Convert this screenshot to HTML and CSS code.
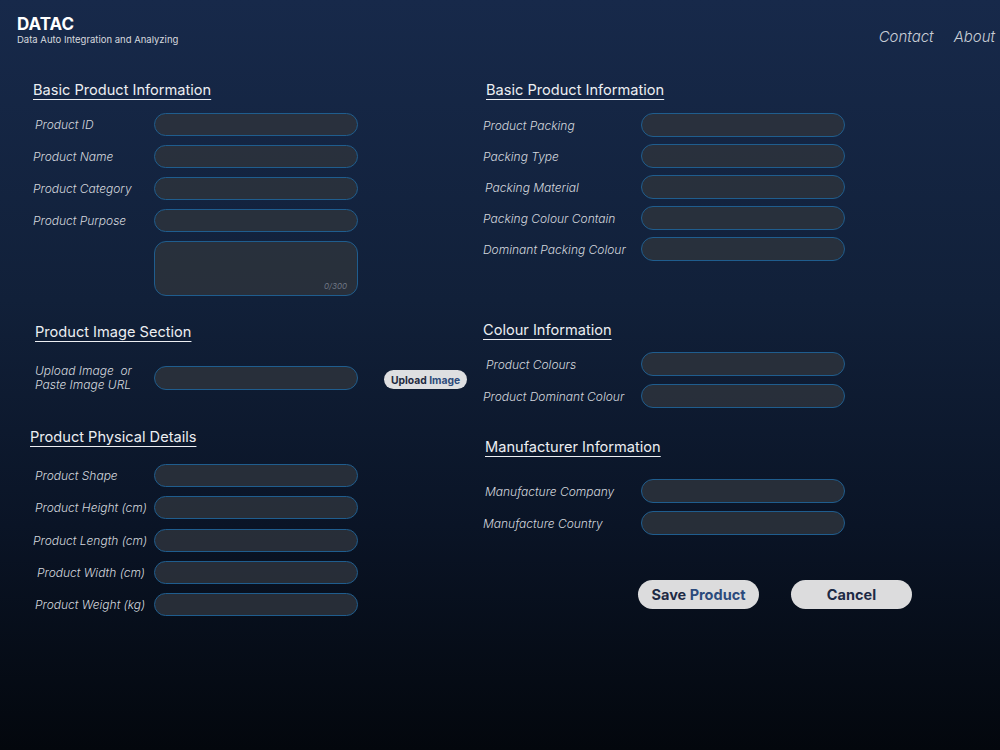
FILE: index.html
```html
<!DOCTYPE html>
<html lang="en">
<head>
<meta charset="UTF-8">
<meta name="viewport" content="width=device-width, initial-scale=1.0">
<title>DATAC - Add Product</title>
<link rel="stylesheet" href="styles.css">
</head>
<body>
    <header class="topbar">
        <div class="brand">
            <div class="brand_name">DATAC</div>
            <div class="brand_sub">Data Auto Integration and Analyzing</div>
        </div>
        <nav class="nav">
            <a href="#">Contact</a>
            <a href="#">About</a>
        </nav>
    </header>

    <form class="product_form">
        <div class="col col_left">
            <section class="block">
                <h2 class="block_title t_indent3">Basic Product Information</h2>
                <div class="rows">
                    <p class="row"><label class="in5">Product ID</label><input type="text"></p>
                    <p class="row"><label class="in3">Product Name</label><input type="text"></p>
                    <p class="row"><label class="in3">Product Category</label><input type="text"></p>
                    <p class="row"><label class="in3">Product Purpose</label><input type="text"></p>
                    <p class="row"><label></label>
                        <span class="textarea_wrap"><textarea></textarea><span class="counter">0/300</span></span>
                    </p>
                </div>
            </section>

            <section class="block block_image">
                <h2 class="block_title t_indent5">Product Image Section</h2>
                <div class="row row_upload">
                    <label class="in5 two_line">Upload Image&nbsp; or<br>Paste Image URL</label>
                    <input type="text">
                    <button type="button" class="btn_upload">Upload <span>Image</span></button>
                </div>
            </section>

            <section class="block block_physical">
                <h2 class="block_title">Product Physical Details</h2>
                <div class="rows">
                    <p class="row"><label class="in5">Product Shape</label><input type="text"></p>
                    <p class="row"><label class="in5">Product Height (cm)</label><input type="text"></p>
                    <p class="row"><label class="in3">Product Length (cm)</label><input type="text"></p>
                    <p class="row"><label class="in7">Product Width (cm)</label><input type="text"></p>
                    <p class="row"><label class="in5">Product Weight (kg)</label><input type="text"></p>
                </div>
            </section>
        </div>

        <div class="col col_right">
            <section class="block">
                <h2 class="block_title t_indent3">Basic Product Information</h2>
                <div class="rows rows_tight">
                    <p class="row"><label>Product Packing</label><input type="text"></p>
                    <p class="row"><label>Packing Type</label><input type="text"></p>
                    <p class="row"><label class="in2">Packing Material</label><input type="text"></p>
                    <p class="row"><label>Packing Colour Contain</label><input type="text"></p>
                    <p class="row"><label>Dominant Packing Colour</label><input type="text"></p>
                </div>
            </section>

            <section class="block block_colour">
                <h2 class="block_title">Colour Information</h2>
                <div class="rows">
                    <p class="row"><label class="in3">Product Colours</label><input type="text"></p>
                    <p class="row"><label>Product Dominant Colour</label><input type="text"></p>
                </div>
            </section>

            <section class="block block_maker">
                <h2 class="block_title t_indent2">Manufacturer Information</h2>
                <div class="rows">
                    <p class="row"><label class="in2">Manufacture Company</label><input type="text"></p>
                    <p class="row"><label>Manufacture Country</label><input type="text"></p>
                </div>
            </section>

            <div class="actions">
                <button type="submit" class="btn">Save <span>Product</span></button>
                <button type="button" class="btn">Cancel</button>
            </div>
        </div>
    </form>
</body>
</html>
```

FILE: styles.css
```css
*,
*::before,
*::after {
  box-sizing: border-box;
}
html, body {
    height: 100%;
}
body {
    margin: 0;
    font-family: Inter, "Noto Sans", sans-serif;
    color: #e6e8ec;
    background: linear-gradient(180deg, #17294a 0%, #112039 40%, #0a1426 70%, #03070d 100%);
    min-height: 750px;
}

/* header */
.topbar {
    display: flex;
    justify-content: space-between;
    padding: 14px 5px 0 17px;
}
.brand_name {
    font-size: 17px;
    font-weight: 700;
    line-height: 20px;
    color: #fff;
}
.brand_sub {
    font-size: 9.5px;
    line-height: 12px;
    color: #d6d9df;
}
.nav {
    display: flex;
    gap: 20px;
    padding-top: 13px;
}
.nav a {
    color: #c9ced6;
    font-style: italic;
    font-weight: 300;
    font-size: 15px;
    text-decoration: none;
}

/* form layout */
.product_form {
    display: grid;
    grid-template-columns: 453px 1fr;
    padding: 35px 0 0 30px;
}
.col {
    display: flex;
    flex-direction: column;
}
.block_title {
    margin: 0;
    font-size: 14.6px;
    font-weight: 400;
    line-height: 18px;
    color: #eceef2;
    text-decoration: underline;
    text-underline-offset: 4px;
    text-decoration-thickness: 1px;
}
.t_indent2 { padding-left: 2px; }
.t_indent3 { padding-left: 3px; }
.t_indent5 { padding-left: 5px; }

.rows {
    display: flex;
    flex-direction: column;
    gap: 9px;
    margin-top: 14px;
}
.rows_tight {
    gap: 7px;
}
.row {
    display: flex;
    align-items: center;
    margin: 0;
}
.row label {
    flex: 0 0 124px;
    font-size: 12px;
    font-style: italic;
    font-weight: 300;
    color: #d3d7de;
}
.col_right .row label {
    flex-basis: 158px;
}
.row label.in2 { padding-left: 2px; }
.row label.in3 { padding-left: 3px; }
.row label.in5 { padding-left: 5px; }
.row label.in7 { padding-left: 7px; }
.row label.two_line {
    line-height: 14px;
}

.row input,
.row textarea {
    width: 204px;
    height: 23px;
    border: 1px solid #1f5d8e;
    border-radius: 12px;
    background: rgba(45, 50, 60, 0.85);
    outline: none;
}
.col_right .row input {
    height: 24px;
}
.textarea_wrap {
    position: relative;
    display: block;
}
.row textarea {
    display: block;
    height: 55px;
    resize: none;
}
.counter {
    position: absolute;
    right: 11px;
    bottom: 5px;
    font-size: 8px;
    font-style: italic;
    color: #6f7784;
}

/* left column sections */
.block_image {
    margin-top: 27px;
}
.row_upload {
    margin-top: 23px;
}
.row_upload input {
    height: 24px;
}
.btn_upload {
    margin: 3px 0 0 26px;
    height: 19px;
    padding: 0 7px;
    border: none;
    border-radius: 10px;
    background: #dedfe1;
    font-family: Inter, sans-serif;
    font-size: 10.3px;
    font-weight: 700;
    color: #1e2a40;
}
.btn_upload span {
    color: #2c4a7a;
}
.block_physical {
    margin-top: 36px;
}
.block_physical .rows {
    margin-top: 18px;
    gap: 9.3px;
}

/* right column sections */
.block_colour {
    margin-top: 60px;
}
.block_colour .rows {
    margin-top: 13px;
    gap: 8px;
}
.block_maker {
    margin-top: 30px;
}
.block_maker .rows {
    margin-top: 23px;
    gap: 8px;
}

.actions {
    display: flex;
    gap: 32px;
    margin: 45px 0 0 155px;
}
.btn {
    width: 121px;
    height: 29px;
    border: none;
    border-radius: 15px;
    background: #dcdcdd;
    font-family: Inter, sans-serif;
    font-size: 14.5px;
    font-weight: 700;
    color: #1d2a44;
}
.btn span {
    color: #2b4a7c;
}
```
